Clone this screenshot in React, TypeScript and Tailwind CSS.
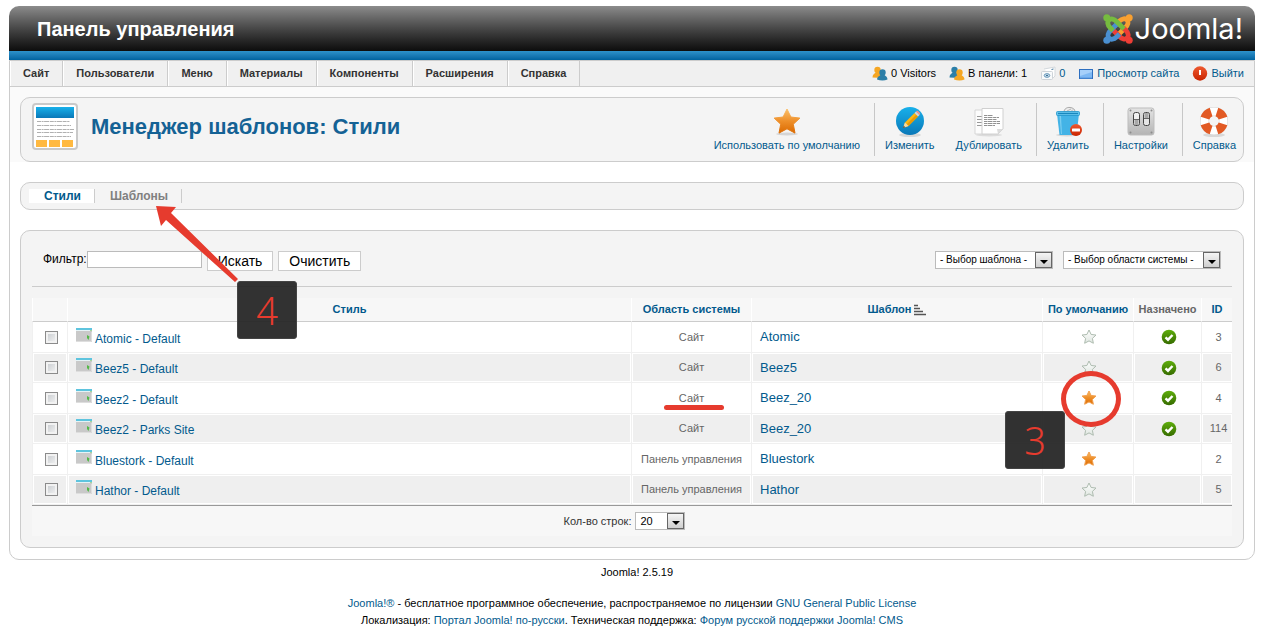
import type { ReactNode } from "react";

const menuItems = ["Сайт", "Пользователи", "Меню", "Материалы", "Компоненты", "Расширения", "Справка"];

const rows = [
  { id: 3, name: "Atomic - Default", area: "Сайт", template: "Atomic", isDefault: false, assigned: true },
  { id: 6, name: "Beez5 - Default", area: "Сайт", template: "Beez5", isDefault: false, assigned: true },
  { id: 4, name: "Beez2 - Default", area: "Сайт", template: "Beez_20", isDefault: true, assigned: true, marked: true },
  { id: 114, name: "Beez2 - Parks Site", area: "Сайт", template: "Beez_20", isDefault: false, assigned: true },
  { id: 2, name: "Bluestork - Default", area: "Панель управления", template: "Bluestork", isDefault: true, assigned: false },
  { id: 5, name: "Hathor - Default", area: "Панель управления", template: "Hathor", isDefault: false, assigned: false },
];

const joomlaArms = [
  { color: "#f9a030", turn: "rotate(90 15 15)" },
  { color: "#ee3e36", turn: "rotate(180 15 15)" },
  { color: "#4a8fd0", turn: "rotate(270 15 15)" },
  { color: "#76bc3f", turn: "rotate(0 15 15)" },
];

const STAR = "M16 2l4.2 8.9 9.8 1.2-7.2 6.7 1.9 9.7L16 23.8l-8.7 4.7 1.9-9.7L2 12.1l9.8-1.2z";

/* Shared gradients */
function Defs() {
  return (
    <svg className="absolute size-0" aria-hidden="true">
      <defs>
        <linearGradient id="orange" x1="0" y1="0" x2="0" y2="1">
          <stop offset="0" stopColor="#fbc06a" />
          <stop offset="0.5" stopColor="#ee8f2a" />
          <stop offset="1" stopColor="#db6a00" />
        </linearGradient>
        <linearGradient id="blue" x1="0" y1="0" x2="0" y2="1">
          <stop offset="0" stopColor="#18b0ea" />
          <stop offset="1" stopColor="#0a78b8" />
        </linearGradient>
        <linearGradient id="green" x1="0" y1="0" x2="0" y2="1">
          <stop offset="0" stopColor="#5fae0c" />
          <stop offset="1" stopColor="#366b00" />
        </linearGradient>
        <linearGradient id="pale" x1="0" y1="0" x2="0" y2="1">
          <stop offset="0" stopColor="#ffffff" />
          <stop offset="1" stopColor="#dfe6e0" />
        </linearGradient>
        <linearGradient id="metal" x1="0" y1="0" x2="0" y2="1">
          <stop offset="0" stopColor="#e4e4e4" />
          <stop offset="1" stopColor="#b4b4b4" />
        </linearGradient>
        <linearGradient id="red" x1="0" y1="0" x2="0" y2="1">
          <stop offset="0" stopColor="#ee5a30" />
          <stop offset="1" stopColor="#c92400" />
        </linearGradient>
      </defs>
    </svg>
  );
}

function JoomlaMark() {
  return (
    <svg className="size-[30px]" viewBox="0 0 30 30" fill="none" strokeWidth="4.8" aria-hidden="true">
      {joomlaArms.map((arm) => (
        <g key={arm.color} transform={arm.turn}>
          <path stroke={arm.color} d="M10 16.500L7 13.500C4.500 11 4 7.500 6 6c2-2 5-1 7.500 1.500l7.500 7.500" />
          <circle cx="3.800" cy="3.800" r="3.500" fill={arm.color} />
        </g>
      ))}
    </svg>
  );
}

function TemplatesIcon() {
  return (
    <svg className="h-[47px] w-[46px]" viewBox="0 0 46 47" aria-hidden="true">
      <rect x="1" y="1" width="44" height="45" rx="3" fill="#fff" stroke="#c9c9c9" strokeWidth="2" />
      <rect x="4" y="4" width="38" height="11" fill="url(#blue)" />
      <path
        stroke="#b0b0b0"
        strokeDasharray="4 0.6 2 0.5 5 0.7"
        d="M5 18.500h33M5 22.500h34M5 26.500h37M5 29.500h36M5 33.500h34"
      />
      <path fill="#ffb941" d="M4 37h11v7H4zM17 37h11v7H17zM30 37h11v7H30z" />
    </svg>
  );
}

function StarIcon() {
  return (
    <svg className="size-8" viewBox="0 0 32 32" aria-hidden="true">
      <ellipse cx="16" cy="28" rx="11" ry="1.500" fill="#d5d5d5" />
      <path
        d="M16 3l3.900 8 9 1.100-6.600 6.100 1.700 8.900-8-4.300-8 4.300 1.700-8.900L3.100 12.100l9-1.100z"
        fill="url(#orange)"
        stroke="url(#orange)"
        strokeLinejoin="round"
      />
    </svg>
  );
}

function EditIcon() {
  return (
    <svg className="size-8" viewBox="0 0 32 32" aria-hidden="true">
      <ellipse cx="16" cy="29" rx="11" ry="2" fill="#d8d8d8" />
      <circle cx="16" cy="15" r="14" fill="url(#blue)" />
      <path d="M9 22l2-5.500L20.500 7l3.500 3.500-9.500 9.500z" fill="#fbb713" />
      <path d="M12.700 18.300L22.200 8.700 24 10.500 14.500 20z" fill="#e79a08" />
      <path d="M20.500 7l1.500-1.500 3.500 3.500L24 10.500z" fill="#d9d9d9" />
      <path d="M22 5.500l.8-.7c.8-.6 4 2.200 3.300 3.400l-.6.8z" fill="#f0928a" />
      <path d="M9 22l2-5.500 3.500 3.500z" fill="#f3d9a8" />
      <path d="M9 22l.8-2.200 1.400 1.400z" fill="#333" />
    </svg>
  );
}

function CopyIcon() {
  return (
    <svg className="size-8" viewBox="0 0 32 32" aria-hidden="true">
      <ellipse cx="16" cy="29" rx="13" ry="1.500" fill="#dcdcdc" />
      <path d="M2 4h17v24H2z" fill="#fcfcfc" stroke="#d6d6d6" />
      <path d="M4 10.500h5M4 13.500h5M4 16.500h5M4 19.500h5" stroke="#999" />
      <path d="M9 2.500h21V23l-5 5H9z" fill="#fff" stroke="#d0d0d0" />
      <path d="M30 23l-5 5-1-5z" fill="#dcdcdc" />
      <path
        d="M11 9.500h9M11 11.500h15M11 13.500h13M11 15.500h16M11 17.500h16M11 19.500h11"
        stroke="#929292"
        strokeDasharray="3 .5 5 .6"
      />
    </svg>
  );
}

function TrashIcon() {
  return (
    <svg className="size-8" viewBox="0 0 32 32" aria-hidden="true">
      <ellipse cx="15" cy="29" rx="11" ry="1.500" fill="#d8d8d8" />
      <path d="M12 6c0-3 3-5 6-4.500 3 .3 5 1.500 5 4.500z" fill="#ececec" stroke="#a8a8a8" />
      <path d="M15 5l4-2M19 5.500l2-2" stroke="#b5b5b5" />
      <path d="M5 8h22l-2.500 21h-17z" fill="#43b3e6" />
      <path d="M7.500 10h1.500l1 18H9z" fill="#7acdf0" />
      <rect x="4.500" y="5.500" width="23" height="4" rx="1" fill="#62c3ec" stroke="#2295cc" strokeWidth=".8" />
      <path d="M6 7.500h20" stroke="#1987bd" strokeWidth="1.200" />
      <circle cx="24" cy="24" r="6" fill="url(#red)" />
      <rect x="20" y="22.500" width="8" height="3" rx=".6" fill="#fff" />
    </svg>
  );
}

function OptionsIcon() {
  return (
    <svg className="size-8" viewBox="0 0 32 32" aria-hidden="true">
      <rect x="3" y="2" width="26" height="27" rx="2.500" fill="url(#metal)" stroke="#bdbdbd" />
      <g fill="#8c8c8c">
        <circle cx="5.500" cy="4.500" r="1" />
        <circle cx="26.500" cy="4.500" r="1" />
        <circle cx="5.500" cy="26.500" r="1" />
        <circle cx="26.500" cy="26.500" r="1" />
      </g>
      <rect x="8.500" y="6.500" width="6" height="13" rx="2" fill="#f0f0f0" stroke="#444" />
      <rect x="18.500" y="6.500" width="6" height="13" rx="2" fill="#e6e6e6" stroke="#444" />
      <path d="M11.500 14v5M21.500 7v5" stroke="#a9a9a9" strokeWidth="4" />
      <path d="M9 13.500h5M19 12.500h5" stroke="#666" />
    </svg>
  );
}

function HelpIcon() {
  return (
    <svg className="size-8" viewBox="0 0 32 32" aria-hidden="true">
      <ellipse cx="16" cy="29" rx="11" ry="2" fill="#d8d8d8" />
      <circle cx="16" cy="15" r="9.500" fill="none" stroke="#d2d2d2" strokeWidth="9" />
      <circle cx="16" cy="15" r="9.500" fill="none" stroke="#ffffff" strokeWidth="8" />
      <circle
        cx="16"
        cy="15"
        r="9.500"
        fill="none"
        stroke="#e25a24"
        strokeWidth="9"
        pathLength="80"
        strokeDasharray="12 8"
        strokeDashoffset="-4"
      />
    </svg>
  );
}

function UsersIcon({ back, front }: { back: string; front: string }) {
  return (
    <svg className="size-4" viewBox="0 0 16 16" aria-hidden="true">
      <circle cx="5.500" cy="4" r="3.200" fill={back} />
      <path d="M.5 11.500C.5 8.500 2.500 7.500 4 6.500h4L11 12z" fill={back} />
      <circle cx="10.500" cy="6.500" r="3.200" fill={front} />
      <path d="M5 13.500c0-2.500 2-3.200 3.500-4.500h4c1.500 1.300 3 2 3 4.500-3 1.200-7 1.200-10.500 0z" fill={front} />
    </svg>
  );
}

function MailIcon() {
  return (
    <svg className="size-4" viewBox="0 0 16 16" aria-hidden="true">
      <path d="M4 3l11-2v9l-2 2" fill="#fff" stroke="#d3d8dc" />
      <rect x="1.500" y="5.500" width="11" height="8" rx="1" fill="#f8fafb" stroke="#cdd3d8" />
      <ellipse cx="7" cy="9.500" rx="2.800" ry="1.800" fill="#cfe0ec" stroke="#5f93b8" />
      <path d="M6 9.500h2M11.500 3.500l2-.5" stroke="#3a7197" />
    </svg>
  );
}

function ScreenIcon() {
  return (
    <svg className="size-4" viewBox="0 0 16 16" aria-hidden="true">
      <rect x="1.500" y="3.500" width="13" height="9" fill="#7db8f3" stroke="#2d6fc0" />
      <path d="M2 4h12v2L2 10z" fill="#a6d0fa" />
      <path d="M2 12h12" stroke="#5b97dc" />
    </svg>
  );
}

function LogoutIcon() {
  return (
    <svg className="size-4" viewBox="0 0 16 16" aria-hidden="true">
      <circle cx="8" cy="7.500" r="7.200" fill="url(#red)" />
      <path d="M8 4v5" stroke="#fff" strokeWidth="2" />
    </svg>
  );
}

function ThumbIcon() {
  return (
    <svg className="h-[14px] w-4" viewBox="0 0 16 14" aria-hidden="true">
      <path fill="#c9c9c9" d="M0 2h16v12H0z" />
      <path fill="#5ec4de" d="M0 0h16v2H0z" />
      <path fill="#e6f3f6" d="M0 2h16v1H0z" />
      <path fill="#a5d79c" d="M14 2h2v1h-2z" />
      <path fill="#53b848" d="M11 7l2.500 1.500L12.500 12 11 10z" />
      <path stroke="#dedede" d="M15.500 4v9.500H0" fill="none" />
    </svg>
  );
}

function SmallStar({ on }: { on: boolean }) {
  return (
    <svg className="size-4" viewBox="0 0 32 32" aria-hidden="true">
      <path
        d={STAR}
        fill={on ? "url(#orange)" : "url(#pale)"}
        stroke={on ? "#f2a04e" : "#aebcb0"}
        strokeWidth="2"
        strokeLinejoin="round"
      />
    </svg>
  );
}

function CheckIcon() {
  return (
    <svg className="size-4" viewBox="0 0 16 16" aria-hidden="true">
      <circle cx="8" cy="8" r="7.300" fill="url(#green)" />
      <path d="M4.500 8.300l2.500 2.400 4.500-4.700" fill="none" stroke="#fff" strokeWidth="2.400" />
    </svg>
  );
}

function SortIcon() {
  return (
    <svg className="h-3 w-3" viewBox="0 0 12 12" aria-hidden="true">
      <path d="M0 1.500h4M0 4.500h6M0 7.500h9M0 10.500h12" stroke="#555" strokeWidth="1.600" />
    </svg>
  );
}

function ToolButton({ icon, label }: { icon: ReactNode; label: string }) {
  return (
    <button className="flex flex-col items-center pr-[7px] pl-[10px] pt-[3px] text-[#025a8d]">
      {icon}
      <span className="leading-[14px]">{label}</span>
    </button>
  );
}

function Divider() {
  return <span className="ml-[7px] w-px bg-[#c7c7c7]" />;
}

function Select({ id, label, className }: { id: string; label: string; className: string }) {
  return (
    <span className={`relative inline-flex h-[18px] text-black ${className}`}>
      <select id={id} aria-label={label} className="w-full appearance-none border border-[#bbb] bg-white pl-1 leading-4">
        <option>{label}</option>
      </select>
      <span className="pointer-events-none absolute top-px right-px flex h-4 w-[17px] items-center justify-center border border-[#666] bg-gradient-to-b from-[#f5f5f5] to-[#cfcfcf] pt-1">
        <span className="border-x-4 border-t-4 border-x-transparent border-t-black" />
      </span>
    </span>
  );
}

function Callout({ children, className }: { children: ReactNode; className: string }) {
  return (
    <span
      className={`absolute flex h-[58px] w-[60px] items-center justify-center rounded-[3px] border border-[#444] bg-[#222222]/93 font-['Noto_Sans',sans-serif] text-[38px] leading-none font-light text-[#e63b2e] ${className}`}
    >
      {children}
    </span>
  );
}

export default function App() {
  return (
    <div className="min-h-screen bg-white pt-[6px] pr-[7px] pl-[9px] font-['Liberation_Sans',Arial,sans-serif] text-[11px] text-[#333]">
      <Defs />

      {/* Header */}
      <header className="flex h-[45px] items-center justify-between rounded-t-[10px] bg-gradient-to-b from-[#8c8c8c] to-[#0d0d0d] pr-3 pl-7">
        <h1 className="text-[20px] font-bold text-white">Панель управления</h1>
        <div className="flex items-center gap-[2px]">
          <JoomlaMark />
          <span className="font-['Inter',sans-serif] text-[29px] leading-8 text-white">Joomla!</span>
        </div>
      </header>
      <div className="h-[9px] bg-gradient-to-b from-[#2d92cb] to-[#0063a0]" />

      <div className="rounded-b-[10px] border border-[#ccc]">
        {/* Menu bar */}
        <div className="flex h-[26px] items-stretch justify-between border-b border-[#ccc] bg-[#f0f0f0]">
          <nav className="flex">
            {menuItems.map((item) => (
              <a
                key={item}
                href="#"
                className="flex items-center border-r border-l border-r-[#ccc] border-l-white pr-[13px] pl-3 font-bold text-[#333]"
              >
                {item}
              </a>
            ))}
          </nav>
          <div className="flex items-center gap-[13px] pr-[10px] text-black">
            <span className="flex items-center gap-[3px]">
              <UsersIcon back="#f5a623" front="#2c7fa8" />0 Visitors
            </span>
            <span className="flex items-center gap-[3px]">
              <UsersIcon back="#2c7fa8" front="#f5a623" />В панели: 1
            </span>
            <a href="#" className="flex items-center gap-[3px] text-[#025a8d]">
              <MailIcon />0
            </a>
            <a href="#" className="flex items-center gap-[3px] text-[#025a8d]">
              <ScreenIcon />
              Просмотр сайта
            </a>
            <a href="#" className="flex items-center gap-[3px] text-[#025a8d]">
              <LogoutIcon />
              Выйти
            </a>
          </div>
        </div>

        {/* Toolbar */}
        <div className="bg-[#fafafa] px-[10px] pt-[10px]">
          <div className="flex h-[65px] justify-between rounded-[10px] border border-[#ccc] bg-[#f4f4f4] py-[5px] pl-[11px]">
            <div className="flex items-start gap-[13px]">
              <TemplatesIcon />
              <h2 className="pt-[10px] text-[22px] leading-7 font-bold text-[#146295]">Менеджер шаблонов: Стили</h2>
            </div>
            <div className="flex">
              <ToolButton icon={<StarIcon />} label="Использовать по умолчанию" />
              <Divider />
              <div className="flex gap-1">
                <ToolButton icon={<EditIcon />} label="Изменить" />
                <ToolButton icon={<CopyIcon />} label="Дублировать" />
              </div>
              <Divider />
              <ToolButton icon={<TrashIcon />} label="Удалить" />
              <Divider />
              <ToolButton icon={<OptionsIcon />} label="Настройки" />
              <Divider />
              <ToolButton icon={<HelpIcon />} label="Справка" />
            </div>
          </div>
        </div>

        <div className="px-[10px] pt-5 pb-[11px]">
          {/* Submenu */}
          <nav className="flex h-7 items-center rounded-[10px] border border-[#ccc] bg-[#f4f4f4] px-2 text-[12px] leading-[14px] font-bold">
            <a href="#" className="border-r border-[#ccc] bg-white pr-[13px] pl-[15px] text-[#025a8d]">
              Стили
            </a>
            <a href="#" className="border-r border-[#ccc] pr-[13px] pl-[15px] text-[#808080]">
              Шаблоны
            </a>
          </nav>

          <main className="relative mt-5 rounded-[10px] border border-[#ccc] bg-[#f4f4f4] px-[11px] pt-5 pb-[11px]">
            {/* Filters */}
            <div className="flex h-9 items-start justify-between border-b border-[#ccc] px-[11px]">
              <div className="flex items-start text-black">
                <label htmlFor="filter" className="text-[12px] leading-4">
                  Фильтр:
                </label>
                <input id="filter" type="text" className="mr-[5px] h-[17px] w-[115px] border border-[#bbb] bg-white px-1" />
                <button className="mr-[5px] h-5 border border-[#ccc] bg-white px-[10px] text-[14px] leading-4">Искать</button>
                <button className="h-5 border border-[#ccc] bg-white px-[10px] text-[14px] leading-4">Очистить</button>
              </div>
              <div className="flex gap-[10px]">
                <Select id="template" label="- Выбор шаблона -" className="w-[118px] text-[10px]" />
                <Select id="area" label="- Выбор области системы -" className="w-[158px] text-[10px]" />
              </div>
            </div>

            {/* Styles table */}
            <table className="mt-[11px] w-full table-fixed border-separate border-spacing-0 bg-[#f7f7f7] text-center">
              <thead>
                <tr className="h-6 text-[#025a8d] *:border-b *:border-l *:border-b-[#ccc] *:border-l-white *:p-0">
                  <th className="w-[35px]" />
                  <th>
                    <a href="#">Стиль</a>
                  </th>
                  <th className="w-[120px]">
                    <a href="#">Область системы</a>
                  </th>
                  <th className="w-[291px]">
                    <a href="#" className="inline-flex items-center gap-[3px]">
                      Шаблон <SortIcon />
                    </a>
                  </th>
                  <th className="w-[91px]">
                    <a href="#">По умолчанию</a>
                  </th>
                  <th className="w-[68px] text-[#666]">Назначено</th>
                  <th className="w-[31px]">
                    <a href="#">ID</a>
                  </th>
                </tr>
              </thead>
              <tbody className="text-[#666]">
                {rows.map((row) => (
                  <tr
                    key={row.id}
                    className="bg-white *:border-b *:border-l *:border-[#f0f0f0] odd:h-[31px] even:h-[30px] even:bg-[#efefef] even:*:shadow-[inset_0_0_0_1px_#fff]"
                  >
                    <td>
                      <span className="flex justify-center pl-[3px]">
                        <input
                          type="checkbox"
                          aria-label={row.name}
                          className="size-[13px] appearance-none border border-[#8b8b8b] bg-gradient-to-br from-[#c4c8cc] to-[#f6f6f6] shadow-[inset_0_0_0_2px_#f2f2f2]"
                        />
                      </span>
                    </td>
                    <td>
                      <span className="flex items-start gap-[3px] pl-2 text-[12px]">
                        <ThumbIcon />
                        <a href="#" className="pt-[3px] leading-4 text-[#025a8d]">
                          {row.name}
                        </a>
                      </span>
                    </td>
                    <td>
                      <span className="relative">
                        {row.area}
                        {row.marked && (
                          <span className="absolute top-[13px] -left-[15px] h-[5px] w-[60px] rounded-full bg-[#e63b2e]" />
                        )}
                      </span>
                    </td>
                    <td className="text-left">
                      <a href="#" className="pl-2 text-[13px] text-[#025a8d]">
                        {row.template}
                      </a>
                    </td>
                    <td>
                      <button className="relative block w-full" aria-label="По умолчанию">
                        <span className="flex justify-center pl-px">
                          <SmallStar on={row.isDefault} />
                        </span>
                        {row.marked && (
                          <span className="absolute -top-[19px] left-[18px] z-10 h-[56px] w-[60px] rounded-[50%] border-[5px] border-[#e63b2e]" />
                        )}
                      </button>
                    </td>
                    <td>
                      <span className="flex justify-center pl-[2px]">{row.assigned && <CheckIcon />}</span>
                    </td>
                    <td className="pl-[3px]">{row.id}</td>
                  </tr>
                ))}
              </tbody>
              <tfoot>
                <tr>
                  <td colSpan={7} className="h-[31px] border-t border-[#999] pr-[15px]">
                    <span className="flex items-center justify-center gap-1">
                      <label htmlFor="limit">Кол-во строк:</label>
                      <Select id="limit" label="20" className="w-[50px]" />
                    </span>
                  </td>
                </tr>
              </tfoot>
            </table>

            {/* Step marks */}
            <svg className="absolute -top-[26px] left-[134px] h-[78px] w-[84px]" viewBox="0 0 84 78" aria-hidden="true">
              <path d="M1 1l20 1-5 6 67 66-3 3L11 15l-5 6z" fill="#e63b2e" />
            </svg>
            <Callout className="top-[50px] left-[216px]">4</Callout>
            <Callout className="top-[180px] right-[178px]">3</Callout>
          </main>
        </div>
      </div>

      {/* Footer */}
      <footer className="pt-1 text-center leading-[17px] text-black">
        <p className="pl-[10px]">Joomla! 2.5.19</p>
        <p className="pt-[14px]">
          <a href="#" className="text-[#025a8d]">Joomla!®</a> - бесплатное программное обеспечение, распространяемое по лицензии{" "}
          <a href="#" className="text-[#025a8d]">GNU General Public License</a>
        </p>
        <p>
          Локализация: <a href="#" className="text-[#025a8d]">Портал Joomla! по-русски</a>. Техническая поддержка:{" "}
          <a href="#" className="text-[#025a8d]">Форум русской поддержки Joomla! CMS</a>
        </p>
      </footer>
    </div>
  );
}
